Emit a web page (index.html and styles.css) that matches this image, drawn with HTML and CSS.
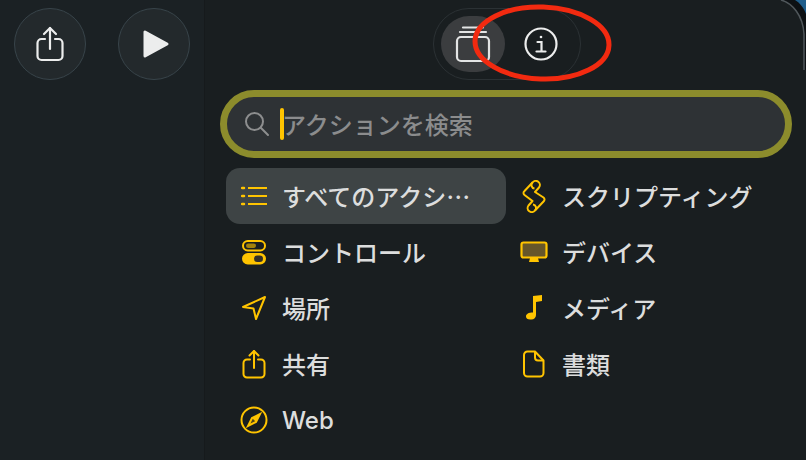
FILE: index.html
```html
<!DOCTYPE html>
<html lang="ja">

<head>
  <meta charset="UTF-8">
  <title>アクションを検索</title>
  <link rel="stylesheet" href="styles.css">
</head>

<body>
  <div class="window">
    <div class="editor">
      <button class="round-button">
        <svg width="32" height="38" viewBox="0 0 32 38" fill="none" stroke="#eceded" stroke-width="2.2" stroke-linecap="round" stroke-linejoin="round">
          <path d="M16 3V24"/>
          <path d="M10 9L16 3L22 9"/>
          <path d="M11 14H7.5A4 4 0 0 0 3.5 18V31A4 4 0 0 0 7.5 35H24.5A4 4 0 0 0 28.5 31V18A4 4 0 0 0 24.5 14H21"/>
        </svg>
      </button>
      <button class="round-button play-button">
        <svg width="28" height="30" viewBox="0 0 28 30">
          <path d="M3 3V27L25 15Z" fill="#eceded" stroke="#eceded" stroke-width="3" stroke-linejoin="round"/>
        </svg>
      </button>
    </div>

    <div class="sidebar">
      <div class="tabs">
        <div class="tab tab-active">
          <svg width="36" height="38" viewBox="0 0 36 38" fill="none" stroke="#e4e5e5" stroke-width="2.2" stroke-linecap="round">
            <rect x="2" y="12" width="32" height="24" rx="4"/>
            <path d="M5 7H31"/>
            <path d="M8 2.500H28"/>
          </svg>
        </div>
        <div class="tab">
          <svg width="34" height="34" viewBox="0 0 34 34" fill="none" stroke="#eceded" stroke-width="2.2" stroke-linecap="round">
            <circle cx="17" cy="17" r="15.500"/>
            <circle cx="17" cy="10" r="1.300" fill="#eceded" stroke="none"/>
            <path d="M13.500 15H17.500V24"/>
            <path d="M12.500 24.500H21.500"/>
          </svg>
        </div>
      </div>

      <div class="search">
        <svg width="26" height="26" viewBox="0 0 26 26" fill="none" stroke="#8d8e8f" stroke-width="2" stroke-linecap="round">
          <circle cx="10.500" cy="10.500" r="8.500"/>
          <path d="M16.800 16.800L24 24"/>
        </svg>
        <span class="caret"></span>
        <span class="search-text">アクションを検索</span>
      </div>

      <div class="categories">
        <div class="category category-selected">
          <span class="category-icon">
            <svg width="26" height="20" viewBox="0 0 26 20" fill="none" stroke="#ffc400" stroke-width="2">
              <path d="M7 2H26M7 10H26M7 18H26"/>
              <path d="M1 2H3M1 10H3M1 18H3" stroke-width="2.500" stroke-linecap="round"/>
            </svg>
          </span>
          <span class="category-name">すべてのアクシ…</span>
        </div>
        <div class="category">
          <span class="category-icon">
            <svg width="24" height="33" viewBox="0 0 24 33" fill="none" stroke="#ffc400" stroke-width="2" stroke-linejoin="round">
              <path d="M2.500 11L10.500 2.500A4 4 0 0 1 17 7.500L13 12L21.500 17.500A2.500 2.500 0 0 1 22 21L13 30.500A4 4 0 0 1 6.500 25.500L10.500 21L2.500 15A2.500 2.500 0 0 1 2.500 11Z"/>
              <path d="M10.500 2.500A3.500 3.500 0 0 0 12.500 8.500M13 30.500A3.500 3.500 0 0 0 11 24.500"/>
            </svg>
          </span>
          <span class="category-name">スクリプティング</span>
        </div>

        <div class="category">
          <span class="category-icon">
            <svg width="26" height="26" viewBox="0 0 26 26" fill="none" stroke="#ffc400" stroke-width="2">
              <rect x="2" y="2" width="22" height="9.500" rx="4.750"/>
              <rect x="5" y="4.500" width="10" height="4.500" rx="2.250" fill="#ffc400" fill-opacity="0.6" stroke="none"/>
              <rect x="1" y="14" width="24" height="11.500" rx="5.750" fill="#ffc400" stroke="none"/>
              <rect x="13" y="16.500" width="9" height="6.500" rx="3.250" fill="#33302a" stroke="none"/>
            </svg>
          </span>
          <span class="category-name">コントロール</span>
        </div>
        <div class="category">
          <span class="category-icon">
            <svg width="28" height="22" viewBox="0 0 28 22">
              <rect x="1.500" y="1.500" width="25" height="15" rx="2" fill="#66562a" stroke="#ffc400" stroke-width="2.200"/>
              <path d="M9 21H19L18 17H10Z" fill="#ffc400"/>
            </svg>
          </span>
          <span class="category-name">デバイス</span>
        </div>

        <div class="category">
          <span class="category-icon">
            <svg width="26" height="26" viewBox="0 0 26 26" fill="none" stroke="#ffc400" stroke-width="2" stroke-linejoin="round">
              <path d="M2 12L24 2L15 24L12.500 13.500Z"/>
            </svg>
          </span>
          <span class="category-name">場所</span>
        </div>
        <div class="category">
          <span class="category-icon">
            <svg width="18" height="26" viewBox="0 0 18 26" fill="#ffc400">
              <path d="M8 1L17 0V6L11 7V20A4.500 4.500 0 0 1 6.500 24.500C3 25 1 23.500 1 21.500C1 19 3.500 17.500 8 17.500Z"/>
            </svg>
          </span>
          <span class="category-name">メディア</span>
        </div>

        <div class="category">
          <span class="category-icon">
            <svg width="24" height="30" viewBox="0 0 24 30" fill="none" stroke="#ffc400" stroke-width="2" stroke-linecap="round" stroke-linejoin="round">
              <path d="M12 2V19"/>
              <path d="M7.500 6.500L12 2L16.500 6.500"/>
              <path d="M8 10.500H5A3.500 3.500 0 0 0 1.500 14V25A3.500 3.500 0 0 0 5 28.500H19A3.500 3.500 0 0 0 22.500 25V14A3.500 3.500 0 0 0 19 10.500H16"/>
            </svg>
          </span>
          <span class="category-name">共有</span>
        </div>
        <div class="category">
          <span class="category-icon">
            <svg width="22" height="28" viewBox="0 0 22 28" fill="none" stroke="#ffc400" stroke-width="2" stroke-linejoin="round">
              <path d="M4.500 1.500H12L20.500 10.500V23A3.500 3.500 0 0 1 17 26.500H4.500A3.500 3.500 0 0 1 1 23V5A3.500 3.500 0 0 1 4.500 1.500Z"/>
              <path d="M12 1.500V7.500A3 3 0 0 0 15 10.500H20.500"/>
            </svg>
          </span>
          <span class="category-name">書類</span>
        </div>

        <div class="category">
          <span class="category-icon">
            <svg width="28" height="28" viewBox="0 0 28 28" fill="none" stroke="#ffc400" stroke-width="2">
              <circle cx="14" cy="14" r="12.500"/>
              <path d="M20 8L16 16L8 20L12 12Z" fill="#ffc400" fill-opacity="0.25"/>
              <path d="M20 8L16 16L12 12Z" fill="#ffc400" stroke="none"/>
            </svg>
          </span>
          <span class="category-name category-latin">Web</span>
        </div>
      </div>
    </div>
  </div>

  <!-- annotation drawn over the screenshot -->
  <svg class="annotation" width="150" height="84" viewBox="0 0 150 84" fill="none">
    <ellipse cx="73" cy="42" rx="67" ry="36" stroke="#f22a10" stroke-width="5" transform="rotate(2 73 42)"/>
  </svg>

  <!-- window corner and what shows behind it -->
  <svg class="corner" width="40" height="70" viewBox="0 0 40 70">
    <path d="M15 0C26 3 37 15 38 34V70H40V0Z" fill="#0d1114"/>
    <path d="M29 0H40V14C38 8 34 3 29 0Z" fill="#1f5e8c"/>
    <path d="M15 0C26 3 37 15 38 34V70" fill="none" stroke="#50575b" stroke-width="1.500"/>
  </svg>
</body>

</html>
```

FILE: styles.css
```css
* {
  box-sizing: border-box;
}

body {
  margin: 0;
  width: 806px;
  height: 460px;
  overflow: hidden;
  background-color: #191e20;
  font-family: "Noto Sans CJK JP", Inter, "Liberation Sans", sans-serif;
}

.window {
  display: flex;
  height: 460px;
}

.editor {
  display: flex;
  gap: 32px;
  width: 205px;
  padding: 8px 0 0 14px;
  border-right: 1px solid #161a1c;
  background-color: #1b2124;
}

.round-button {
  display: flex;
  justify-content: center;
  align-items: center;
  width: 72px;
  height: 72px;
  padding: 0;
  border: 1.500px solid #38444a;
  border-radius: 50%;
  background-color: #23292c;
}

.play-button svg {
  margin-left: 4px;
}

.sidebar {
  flex: 1;
  padding: 8px 14px 0 15px;
  background-color: #191e20;
}

.tabs {
  display: flex;
  width: 148px;
  height: 72px;
  margin-left: 213px;
  padding: 7px 6.500px;
  border: 1.500px solid #2b3134;
  border-radius: 36px;
}

.tab {
  display: flex;
  flex: none;
  justify-content: center;
  align-items: center;
  width: 72px;
  height: 56px;
  border-radius: 28px;
}

.tab-active {
  width: 64px;
  background-color: #3b3d3f;
}

.search {
  display: flex;
  align-items: center;
  height: 68px;
  margin-top: 10px;
  padding-left: 17px;
  border: 7px solid #8c8c2c;
  border-radius: 34px;
  background-color: #2e3235;
}

.caret {
  width: 4px;
  height: 32px;
  margin-left: 10px;
  border-radius: 2px;
  background-color: #ffc400;
}

.search-text {
  margin-left: -2px;
  padding-bottom: 2px;
  color: #8b8c8d;
  font-size: 24px;
  font-weight: 500;
}

.categories {
  display: grid;
  grid-template-columns: 280px 280px;
  grid-auto-rows: 56px;
  margin-top: 10px;
  margin-left: 6px;
}

.category {
  display: flex;
  align-items: center;
  height: 56px;
  color: #dcdddd;
  font-size: 24px;
  font-weight: 500;
}

.category-selected {
  border-radius: 14px;
  background-color: #3e4445;
}

.category-icon {
  display: flex;
  justify-content: center;
  flex: none;
  width: 56px;
}

.category-name {
  padding-bottom: 2px;
  white-space: nowrap;
}

.category-latin {
  font-family: Inter, "Liberation Sans", sans-serif;
  padding-bottom: 0;
}

.annotation {
  position: absolute;
  left: 469px;
  top: 1px;
}

.corner {
  position: absolute;
  top: 0;
  right: 0;
}
```
